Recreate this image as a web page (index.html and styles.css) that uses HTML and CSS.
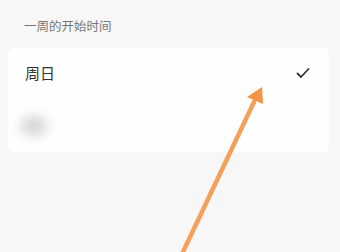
FILE: index.html
```html
<!DOCTYPE html>
<html lang="zh">
<head>
    <meta charset="UTF-8">
    <meta name="viewport" content="width=device-width, initial-scale=1.0">
    <title>一周的开始时间</title>
    <link rel="stylesheet" href="styles.css">
</head>
<body>
    <div class="page">
        <div class="section-title">一周的开始时间</div>
        <div class="card">
            <div class="row">
                <span class="row-label">周日</span>
                <svg class="check" width="14" height="12" viewBox="0 0 14 12">
                    <path d="M1.5 6.5 L5 10 L12.5 2" fill="none" stroke="#333" stroke-width="1.8" stroke-linecap="round" stroke-linejoin="round"/>
                </svg>
            </div>
            <div class="row">
                <span class="blurred"></span>
            </div>
        </div>
    </div>
    <svg class="arrow" width="340" height="252" viewBox="0 0 340 252">
        <line x1="182" y1="254" x2="254" y2="102" stroke="#f5a05a" stroke-width="4.5" stroke-linecap="round"/>
        <polygon points="262,87 263,104 247,97" fill="#f39444"/>
    </svg>
</body>
</html>
```

FILE: styles.css
```css
body {
    margin: 0;
    background: #f7f7f7;
    font-family: "Noto Sans CJK SC", "Noto Sans", sans-serif;
    width: 340px;
    height: 252px;
    overflow: hidden;
    position: relative;
}
.page {
    padding: 0 11px 0 8px;
}
.section-title {
    font-size: 12.5px;
    color: #777;
    line-height: 18px;
    padding: 17px 0 0 16px;
    height: 31px;
    box-sizing: border-box;
}
.card {
    background: #fefefe;
    border-radius: 6px;
    margin-top: 17px;
}
.row {
    display: flex;
    align-items: center;
    justify-content: space-between;
    height: 52px;
    padding: 0 19px 0 17px;
}
.row-label {
    font-size: 15px;
    line-height: 18px;
    margin-top: -3px;
    color: #333;
}
.check {
    display: block;
    margin-top: -3px;
}
.blurred {
    width: 26px;
    height: 20px;
    margin-left: -4px;
    border-radius: 50%;
    background: #d4d4d4;
    filter: blur(6px);
}
.arrow {
    position: absolute;
    left: 0;
    top: 0;
    pointer-events: none;
}
```
